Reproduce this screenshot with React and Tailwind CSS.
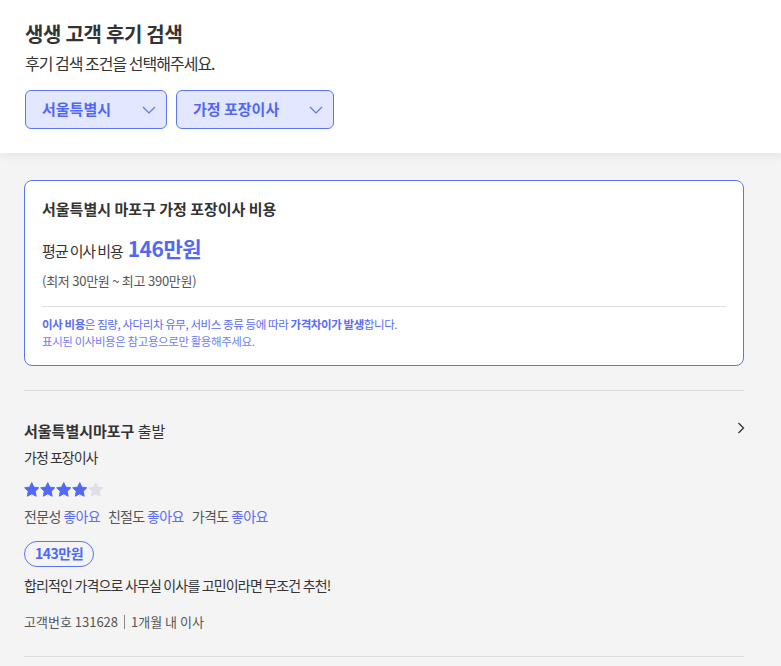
import React from 'react'

const font = { fontFamily: '"Noto Sans CJK KR", "Noto Sans", sans-serif' }

function Chevron() {
  return (
    <svg width="14" height="8" viewBox="0 0 14 8" fill="none">
      <path d="M1 1l6 6 6-6" stroke="#5b74f5" strokeWidth="1.2" />
    </svg>
  )
}

function Star({ on }) {
  return (
    <svg width="15.5" height="15.5" viewBox="0 0 24 24">
      <path
        d="M12 1l3.4 7 7.6 1-5.6 5.3 1.4 7.7L12 18.3 5.2 22l1.4-7.7L1 9l7.6-1z"
        fill={on ? '#5068f5' : '#dde0e6'}
        stroke={on ? '#5068f5' : '#dde0e6'}
        strokeLinejoin="round"
        strokeWidth="1.5"
      />
    </svg>
  )
}

export default function App() {
  return (
    <div className="min-h-[666px] w-[781px] bg-[#f4f4f4] text-[#333]" style={font}>
      {/* header */}
      <div className="bg-white px-[25px] pt-[20px] pb-[24px] shadow-[0_2px_10px_rgba(0,0,0,0.08)]">
        <h1 className="text-[20px] font-bold leading-[28px] tracking-[-0.3px]">생생 고객 후기 검색</h1>
        <p className="mt-[3px] text-[16px] leading-[24px] tracking-[-1px] text-[#333]">후기 검색 조건을 선택해주세요.</p>
        <div className="mt-[15px] flex gap-[9px]">
          <button className="flex h-[39px] w-[142px] items-center justify-between rounded-[6px] border border-[#5b74f5] bg-[#e3e7ff] pl-[16px] pr-[10px] text-[15px] font-bold text-[#5068f5]">
            서울특별시
            <Chevron />
          </button>
          <button className="flex h-[39px] w-[158px] items-center justify-between rounded-[6px] border border-[#5b74f5] bg-[#e3e7ff] pl-[16px] pr-[10px] text-[15px] font-bold text-[#5068f5]">
            가정 포장이사
            <Chevron />
          </button>
        </div>
      </div>

      <div className="px-[24px] pt-[27px] pr-[37px]">
        {/* cost card */}
        <div className="rounded-[8px] border border-[#5b74f5] bg-white px-[17px] pt-[17px] pb-[15px]">
          <h2 className="text-[15px] font-bold leading-[22px]">서울특별시 마포구 가정 포장이사 비용</h2>
          <div className="mt-[13px] flex h-[30px] items-baseline gap-[5px]">
            <span className="text-[15px] tracking-[-1.1px]">평균 이사 비용</span>
            <span className="text-[21px] font-bold leading-[30px] tracking-[-0.5px] text-[#5068f5]">146만원</span>
          </div>
          <p className="mt-[8px] text-[13px] leading-[20px] tracking-[-0.25px] text-[#555]">(최저 30만원 ~ 최고 390만원)</p>
          <div className="mt-[15px] border-t border-[#dcdcdc]" />
          <div className="mt-[9px] text-[11.5px] leading-[17px] tracking-[-0.42px] text-[#5b6cf5]">
            <p>
              <b>이사 비용</b>은 짐량, 사다리차 유무, 서비스 종류 등에 따라 <b>가격차이가 발생</b>합니다.
            </p>
            <p className="text-[#6f80f7]">표시된 이사비용은 참고용으로만 활용해주세요.</p>
          </div>
        </div>

        {/* review */}
        <div className="mt-[24px] border-t border-[#dcdde3] pt-[28px] pb-[24px]">
          <div className="flex items-start justify-between">
            <p className="text-[15px] leading-[24px]">
              <b>서울특별시마포구</b> 출발
            </p>
            <svg width="8" height="12" viewBox="0 0 8 12" className="mt-[3px] mr-[-1px]" fill="none">
              <path d="M1.5 1l5 5-5 5" stroke="#333" strokeWidth="1.3" />
            </svg>
          </div>
          <p className="mt-[4px] text-[14px] leading-[20px] tracking-[-1px]">가정 포장이사</p>
          <div className="mt-[15px] flex gap-[0.5px]">
            <Star on />
            <Star on />
            <Star on />
            <Star on />
            <Star />
          </div>
          <p className="mt-[8px] text-[14px] leading-[20px] tracking-[-0.65px] text-[#555]">
            전문성 <span className="text-[#5b6cf5]">좋아요</span>
            <span className="ml-[8px]">친절도</span> <span className="text-[#5b6cf5]">좋아요</span>
            <span className="ml-[8px]">가격도</span> <span className="text-[#5b6cf5]">좋아요</span>
          </p>
          <span className="mt-[15px] inline-flex h-[26px] items-center rounded-full border border-[#5b74f5] px-[10px] text-[14px] font-bold tracking-[-0.5px] text-[#5068f5]">
            143만원
          </span>
          <p className="mt-[8px] text-[14px] leading-[20px] tracking-[-0.84px]">합리적인 가격으로 사무실 이사를 고민이라면 무조건 추천!</p>
          <p className="mt-[17px] flex items-center text-[13px] leading-[20px] text-[#555]">
            고객번호 131628
            <span className="mx-[6px] h-[14px] w-px bg-[#888]" />
            1개월 내 이사
          </p>
        </div>
        <div className="border-t border-[#dcdde3]" />
      </div>
    </div>
  )
}
